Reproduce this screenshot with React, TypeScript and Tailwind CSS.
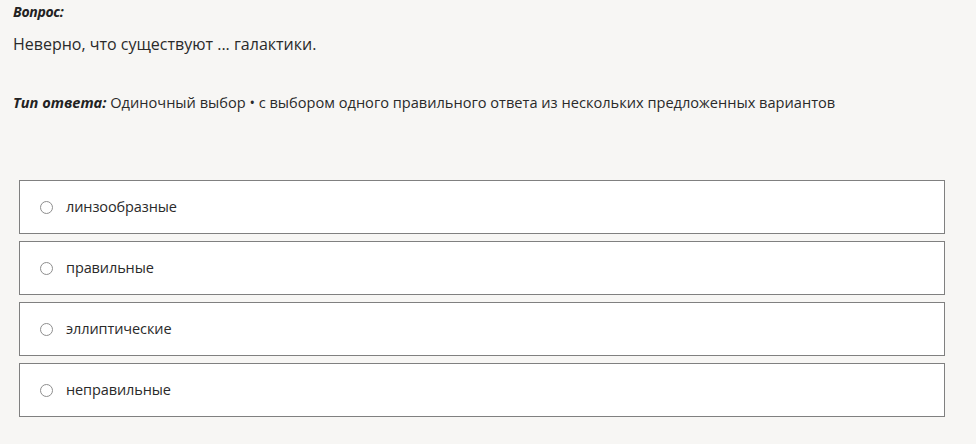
import React from 'react';

const options = ['линзообразные', 'правильные', 'эллиптические', 'неправильные'];

export default function App() {
    return (
        <div className="min-h-[444px] w-full bg-[#f7f6f4] text-[#222] font-['Segoe_UI','Open_Sans',sans-serif]">
            <div className="px-[13px] pt-[2px]">
                <div className="text-[14px] font-bold italic leading-[20px] tracking-[-0.3px]">Вопрос:</div>
                <div className="mt-[11px] text-[16px] leading-[22px] text-[#2a2a2a]">Неверно, что существуют ... галактики.</div>
                <div className="mt-[37px] text-[14.6px] leading-[20px] text-[#2a2a2a]">
                    <span className="font-bold italic text-[#222]">Тип ответа:</span> Одиночный выбор • с выбором одного правильного ответа из нескольких предложенных вариантов
                </div>
            </div>

            <div className="mt-[68px] ml-[19px] w-[926px] flex flex-col gap-[7px]">
                {options.map((opt) => (
                    <label key={opt} className="h-[54px] border border-[#808080] bg-white flex items-center pl-[20px] cursor-pointer">
                        <span className="w-[13px] h-[13px] rounded-full border-[1.5px] border-[#8e8e8e] bg-white shrink-0" />
                        <span className="ml-[13px] text-[14.5px] text-[#2a2a2a] tracking-[-0.1px]">{opt}</span>
                    </label>
                ))}
            </div>
        </div>
    );
}
